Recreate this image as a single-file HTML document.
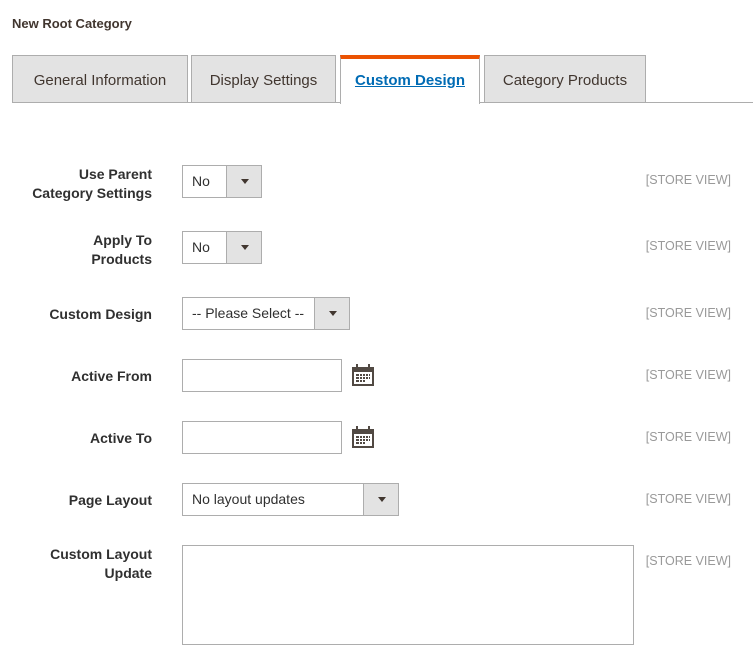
<!DOCTYPE html>
<html><head><style>
body{margin:0;width:753px;height:656px;background:#fff;font-family:"Liberation Sans",sans-serif;position:relative;overflow:hidden;color:#303030}
.a{position:absolute}
.title{left:12px;top:16px;font-size:13px;font-weight:bold;color:#41362f}
.tab{position:absolute;top:55px;height:47px;background:#e3e3e3;border:1px solid #adadad;border-bottom:none;box-sizing:border-box;font-size:15px;color:#41362f;text-align:center;line-height:50px}
.act{background:#fff;border-top:4px solid #eb5202;line-height:44px;color:#006bb4;text-decoration:underline;font-weight:bold;height:49px}
.lbl{position:absolute;right:601px;text-align:right;font-size:14px;font-weight:bold;color:#303030;line-height:19px}
.sv{position:absolute;right:22px;font-size:12.5px;color:#999;}
.sel{position:absolute;left:182px;height:33px;border:1px solid #adadad;box-sizing:border-box;font-size:14px;line-height:31px;padding-left:9px;color:#303030}
.sel .ar{position:absolute;top:0;right:0;width:34px;height:31px;background:#e3e3e3;border-left:1px solid #adadad}
.sel .ar:after{content:"";position:absolute;left:14px;top:13px;border-left:4px solid transparent;border-right:4px solid transparent;border-top:5px solid #41362f}
.inp{position:absolute;left:182px;width:160px;height:33px;border:1px solid #adadad;box-sizing:border-box}
.cal{position:absolute;left:352px;width:22px;height:22px}
</style></head><body>
<div class="a title">New Root Category</div>
<div class="tab" style="left:12px;width:176px">General Information</div>
<div class="tab" style="left:191px;width:145px">Display Settings</div>
<div class="tab act" style="left:340px;width:140px">Custom Design</div>
<div class="tab" style="left:484px;width:162px">Category Products</div>
<div class="a" style="left:12px;top:102px;width:328px;height:1px;background:#adadad"></div>
<div class="a" style="left:480px;top:102px;width:273px;height:1px;background:#adadad"></div>

<div class="lbl" style="top:165px">Use Parent<br>Category Settings</div>
<div class="sel" style="top:165px;width:80px">No<div class="ar"></div></div>
<div class="sv" style="top:173px">[STORE VIEW]</div>

<div class="lbl" style="top:231px">Apply To<br>Products</div>
<div class="sel" style="top:231px;width:80px">No<div class="ar"></div></div>
<div class="sv" style="top:239px">[STORE VIEW]</div>

<div class="lbl" style="top:305px">Custom Design</div>
<div class="sel" style="top:297px;width:168px">-- Please Select --<div class="ar"></div></div>
<div class="sv" style="top:306px">[STORE VIEW]</div>

<div class="lbl" style="top:367px">Active From</div>
<div class="inp" style="top:359px"></div>
<svg class="cal" style="top:364px" viewBox="0 0 22 22"><rect x="0" y="3" width="22" height="19" fill="#514943"/><rect x="4" y="0" width="2" height="5" fill="#514943"/><rect x="16" y="0" width="2" height="5" fill="#514943"/><rect x="2" y="8" width="18" height="12" fill="#fff"/><g fill="#514943"><rect x="4" y="10" width="14" height="2"/><rect x="4" y="13" width="14" height="2"/><rect x="4" y="16" width="10" height="2"/></g><g fill="#fff"><rect x="7" y="9" width="1" height="10"/><rect x="10" y="9" width="1" height="10"/><rect x="13" y="9" width="1" height="10"/><rect x="16" y="9" width="1" height="10"/></g></svg>
<div class="sv" style="top:368px">[STORE VIEW]</div>

<div class="lbl" style="top:429px">Active To</div>
<div class="inp" style="top:421px"></div>
<svg class="cal" style="top:426px" viewBox="0 0 22 22"><rect x="0" y="3" width="22" height="19" fill="#514943"/><rect x="4" y="0" width="2" height="5" fill="#514943"/><rect x="16" y="0" width="2" height="5" fill="#514943"/><rect x="2" y="8" width="18" height="12" fill="#fff"/><g fill="#514943"><rect x="4" y="10" width="14" height="2"/><rect x="4" y="13" width="14" height="2"/><rect x="4" y="16" width="10" height="2"/></g><g fill="#fff"><rect x="7" y="9" width="1" height="10"/><rect x="10" y="9" width="1" height="10"/><rect x="13" y="9" width="1" height="10"/><rect x="16" y="9" width="1" height="10"/></g></svg>
<div class="sv" style="top:430px">[STORE VIEW]</div>

<div class="lbl" style="top:491px">Page Layout</div>
<div class="sel" style="top:483px;width:217px">No layout updates<div class="ar"></div></div>
<div class="sv" style="top:492px">[STORE VIEW]</div>

<div class="lbl" style="top:545px">Custom Layout<br>Update</div>
<div class="a" style="left:182px;top:545px;width:452px;height:100px;border:1px solid #adadad;box-sizing:border-box"></div>
<div class="sv" style="top:554px">[STORE VIEW]</div>
</body></html>
